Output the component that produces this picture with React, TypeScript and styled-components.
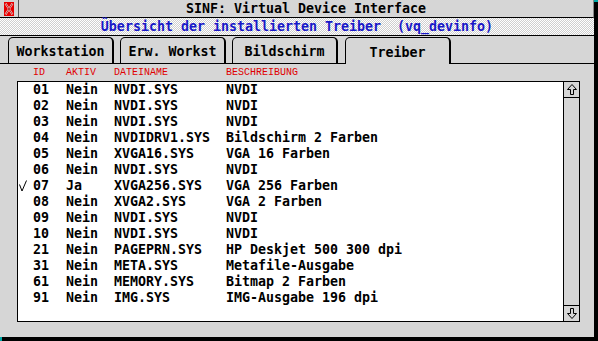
import React, { FC } from 'react'
import styled, { createGlobalStyle } from 'styled-components'

interface Driver {
    id: string
    active: boolean
    file: string
    desc: string
}

const drivers: Driver[] = [
    { id: '01', active: false, file: 'NVDI.SYS', desc: 'NVDI' },
    { id: '02', active: false, file: 'NVDI.SYS', desc: 'NVDI' },
    { id: '03', active: false, file: 'NVDI.SYS', desc: 'NVDI' },
    { id: '04', active: false, file: 'NVDIDRV1.SYS', desc: 'Bildschirm 2 Farben' },
    { id: '05', active: false, file: 'XVGA16.SYS', desc: 'VGA 16 Farben' },
    { id: '06', active: false, file: 'NVDI.SYS', desc: 'NVDI' },
    { id: '07', active: true, file: 'XVGA256.SYS', desc: 'VGA 256 Farben' },
    { id: '08', active: false, file: 'XVGA2.SYS', desc: 'VGA 2 Farben' },
    { id: '09', active: false, file: 'NVDI.SYS', desc: 'NVDI' },
    { id: '10', active: false, file: 'NVDI.SYS', desc: 'NVDI' },
    { id: '21', active: false, file: 'PAGEPRN.SYS', desc: 'HP Deskjet 500 300 dpi' },
    { id: '31', active: false, file: 'META.SYS', desc: 'Metafile-Ausgabe' },
    { id: '61', active: false, file: 'MEMORY.SYS', desc: 'Bitmap 2 Farben' },
    { id: '91', active: false, file: 'IMG.SYS', desc: 'IMG-Ausgabe 196 dpi' },
]

const tabs = ['Workstation', 'Erw. Workst', 'Bildschirm', 'Treiber']

const Arrow: FC<{ down?: boolean }> = ({ down }) => (
    <svg width="10" height="11" viewBox="0 0 10 11" style={down ? { transform: 'rotate(180deg)' } : undefined}>
        <polygon points="5,0.5 9.5,5.5 6.5,5.5 6.5,10.5 3.5,10.5 3.5,5.5 0.5,5.5" fill="none" stroke="#000" strokeWidth="1" />
    </svg>
)

const App: FC = () => {
    return (
        <>
            <GlobalStyle />
            <Window>
                <TitleBar>
                    <CloseBox>
                        <svg width="12" height="14" viewBox="0 0 12 14">
                            <rect x="1" y="0" width="10" height="14" fill="#e80000" />
                            <path d="M2.5 1.5 L9.5 12.5 M9.5 1.5 L2.5 12.5" stroke="#ffd0d0" strokeWidth="2" />
                            <path d="M2.5 1.5 L9.5 12.5 M9.5 1.5 L2.5 12.5" stroke="#900" strokeWidth="0.8" />
                        </svg>
                    </CloseBox>
                    <Title>SINF: Virtual Device Interface</Title>
                </TitleBar>
                <InfoLine>Übersicht der installierten Treiber&nbsp; (vq_devinfo)</InfoLine>
                <TabRow>
                    {tabs.map((t) => (
                        <Tab key={t} $active={t === 'Treiber'}>
                            {t}
                        </Tab>
                    ))}
                </TabRow>
                <Content>
                    <Header>
                        <span />
                        <span>ID</span>
                        <span>AKTIV</span>
                        <span>DATEINAME</span>
                        <span>BESCHREIBUNG</span>
                    </Header>
                    <ListBox>
                        <Rows>
                            {drivers.map((d) => (
                                <Row key={d.id}>
                                    <Check>
                                        {d.active && (
                                            <svg width="8" height="12" viewBox="0 0 8 12">
                                                <polyline points="0.5,4.5 3,11 7.5,0.5" fill="none" stroke="#000" strokeWidth="1" />
                                            </svg>
                                        )}
                                    </Check>
                                    <span>{d.id}</span>
                                    <span>{d.active ? 'Ja' : 'Nein'}</span>
                                    <span>{d.file}</span>
                                    <span>{d.desc}</span>
                                </Row>
                            ))}
                        </Rows>
                        <ScrollBar>
                            <ScrollButton>
                                <Arrow />
                            </ScrollButton>
                            <Track />
                            <ScrollButton $bottom>
                                <Arrow down />
                            </ScrollButton>
                        </ScrollBar>
                    </ListBox>
                </Content>
            </Window>
        </>
    )
}
export default App

const GlobalStyle = createGlobalStyle`
    html, body {
        margin: 0;
        padding: 0;
        background: #00a8a8;
    }
    body {
        width: 598px;
        height: 341px;
        overflow: hidden;
    }
`
const Window = styled.div`
    width: 594px;
    height: 337px;
    background: #d6d6d6;
    box-shadow: 3px 3px 0 1px #000;
    display: flex;
    flex-direction: column;
    font-family: 'DejaVu Sans Mono', 'Liberation Mono', monospace;
    font-weight: bold;
    font-size: 13.3px;
    color: #000;
`
const TitleBar = styled.div`
    height: 17px;
    display: flex;
    border-bottom: 1px solid #000;
    border-right: 1px solid #888;
`
const CloseBox = styled.div`
    width: 18px;
    display: flex;
    align-items: center;
    justify-content: center;
    border-right: 1px solid #555;
`
const Title = styled.div`
    flex: 1;
    text-align: center;
    line-height: 17px;
`
const InfoLine = styled.div`
    height: 17px;
    line-height: 17px;
    text-align: center;
    color: #1818c8;
    border-bottom: 1px solid #000;
    background: repeating-conic-gradient(#cfcfcf 0 25%, #ffffff 0 50%) 0 0 / 2px 2px;
`
const TabRow = styled.div`
    height: 27px;
    display: flex;
    align-items: flex-end;
    gap: 6px;
    padding-left: 8px;
    border-bottom: 1px solid #000;
`
const Tab = styled.div<{ $active?: boolean }>`
    width: 106px;
    height: ${(p) => (p.$active ? '27px' : '26px')};
    margin-left: ${(p) => (p.$active ? '1px' : '0')};
    margin-bottom: ${(p) => (p.$active ? '-1px' : '0')};
    background: #d6d6d6;
    border: 1px solid #000;
    border-right-width: 2px;
    border-bottom: none;
    border-radius: 5px 5px 0 0;
    display: flex;
    align-items: center;
    justify-content: center;
    padding-top: 2px;
    box-sizing: border-box;
`
const Content = styled.div`
    flex: 1;
    display: flex;
    flex-direction: column;
    padding: 2px 14px 15px 17px;
    min-height: 0;
`
const Columns = `
    display: grid;
    grid-template-columns: 15px 33px 48px 112px 1fr;
    white-space: pre;
`
const Header = styled.div`
    ${Columns}
    height: 15px;
    line-height: 13px;
    padding-left: 1px;
    font-family: 'Liberation Mono', monospace;
    font-weight: normal;
    font-size: 10px;
    color: #e00000;
`
const ListBox = styled.div`
    flex: 1;
    display: flex;
    border: 1px solid #000;
    background: #fff;
    min-height: 0;
`
const Rows = styled.div`
    flex: 1;
    display: flex;
    flex-direction: column;
`
const Row = styled.div`
    ${Columns}
    height: 16px;
    line-height: 16px;
`
const Check = styled.span`
    display: flex;
    align-items: center;
    padding-left: 1px;
`
const ScrollBar = styled.div`
    width: 15px;
    border-left: 1px solid #000;
    display: flex;
    flex-direction: column;
    background: #d6d6d6;
`
const ScrollButton = styled.div<{ $bottom?: boolean }>`
    height: 15px;
    display: flex;
    align-items: center;
    justify-content: center;
    border-top: ${(p) => (p.$bottom ? '1px solid #000' : 'none')};
    border-bottom: ${(p) => (p.$bottom ? 'none' : '1px solid #000')};
`
const Track = styled.div`
    flex: 1;
`
